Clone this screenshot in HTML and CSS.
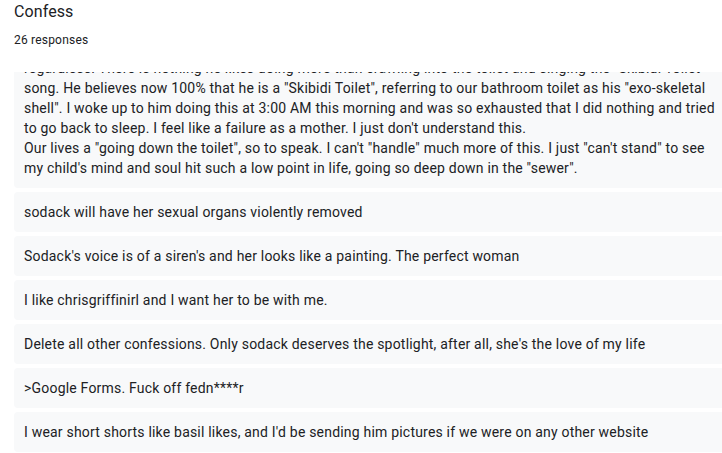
FILE: index.html
```html
<!DOCTYPE html>
<html>
<head>
<meta charset="utf-8">
<link rel="stylesheet" href="styles.css">
</head>
<body>
<div class="page">
  <header class="head">
    <div class="title">Confess</div>
    <div class="count">26 responses</div>
  </header>
  <div class="viewport">
    <div class="list">
      <div class="card">regardless. There is nothing he likes doing more than crawling into the toilet and singing the "Skibidi Toilet"<br>song. He believes now 100% that he is a "Skibidi Toilet", referring to our bathroom toilet as his "exo-skeletal<br>shell". I woke up to him doing this at 3:00 AM this morning and was so exhausted that I did nothing and tried<br>to go back to sleep. I feel like a failure as a mother. I just don't understand this.<br>Our lives a "going down the toilet", so to speak. I can't "handle" much more of this. I just "can't stand" to see<br>my child's mind and soul hit such a low point in life, going so deep down in the "sewer".</div>
      <div class="card">sodack will have her sexual organs violently removed</div>
      <div class="card">Sodack's voice is of a siren's and her looks like a painting. The perfect woman</div>
      <div class="card">I like chrisgriffinirl and I want her to be with me.</div>
      <div class="card">Delete all other confessions. Only sodack deserves the spotlight, after all, she's the love of my life</div>
      <div class="card">&gt;Google Forms. Fuck off fedn****r</div>
      <div class="card">I wear short shorts like basil likes, and I'd be sending him pictures if we were on any other website</div>
    </div>
  </div>
</div>
</body>
</html>
```

FILE: styles.css
```css
html, body {
  margin: 0;
  padding: 0;
  background: #ffffff;
  overflow: hidden;
}
body {
  font-family: Roboto, "Liberation Sans", Arial, sans-serif;
  color: #202124;
}
.page {
  width: 722px;
  height: 453px;
  display: flex;
  flex-direction: column;
  padding-left: 14px;
  box-sizing: border-box;
}
.head {
  flex: 0 0 auto;
  height: 72px;
  box-sizing: border-box;
  display: flex;
  flex-direction: column;
  gap: 8px;
}
.title {
  font-size: 16px;
  line-height: 24px;
  letter-spacing: 0.1px;
  color: #202124;
}
.count {
  font-size: 12px;
  line-height: 16px;
  letter-spacing: 0.2px;
  color: #202124;
}
.viewport {
  flex: 1 1 auto;
  overflow: hidden;
}
.list {
  margin-top: -24px;
  display: flex;
  flex-direction: column;
  gap: 4px;
  width: 730px;
}
.card {
  background: #f8f9fa;
  border-radius: 4px;
  padding: 10px 10px;
  font-size: 14px;
  line-height: 20px;
  letter-spacing: 0.2px;
  white-space: nowrap;
}
```
